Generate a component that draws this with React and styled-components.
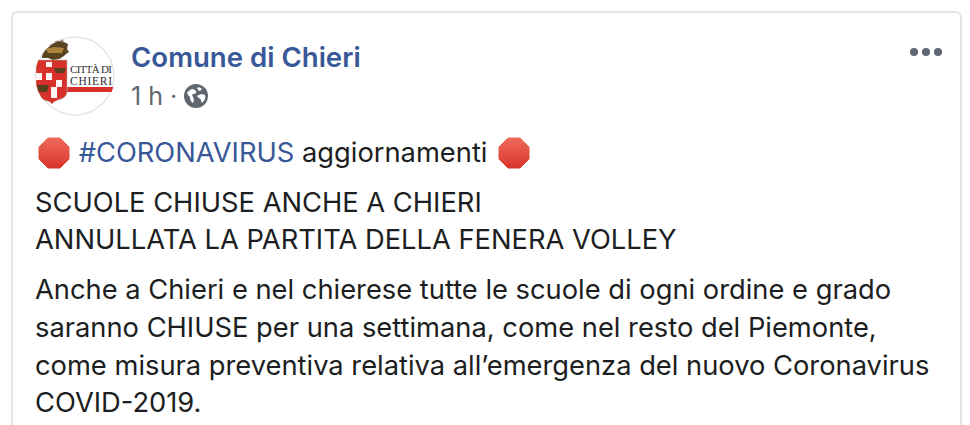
import React from "react";
import styled, { createGlobalStyle } from "styled-components";

const Page = createGlobalStyle`
    html, body {
        margin: 0;
        padding: 0;
        width: 970px;
        height: 425px;
        overflow: hidden;
        background: #fff;
    }
`;

// Component Styling
const Wrap = styled.div`
    padding: 11px 8px 0 11px;
    font-family: Inter, "Liberation Sans", Arial, sans-serif;
`;

const Card = styled.article`
    border: 2px solid #e3e4e8;
    border-bottom: 0;
    border-radius: 6px 6px 0 0;
    height: 414px;
    box-sizing: border-box;
    padding: 23px 18px 0 22px;
    overflow: hidden;
`;

const Header = styled.header`
    display: flex;
    align-items: flex-start;
`;

const Avatar = styled.div`
    width: 80px;
    height: 80px;
    flex: none;
    border-radius: 50%;
    overflow: hidden;
    svg { display: block; }
`;

const Meta = styled.div`
    flex: 1;
    margin-left: 16px;
    padding-top: 5px;
`;

const PageName = styled.div`
    color: #385898;
    font-size: 27.6px;
    font-weight: 600;
    line-height: 33px;
`;

const Time = styled.div`
    display: flex;
    align-items: center;
    margin-top: 7px;
    color: #606770;
    font-size: 25px;
    line-height: 30px;
    svg { margin-left: 7px; }
`;

const Dots = styled.div`
    display: flex;
    gap: 4px;
    margin-top: 12px;
`;

const Dot = styled.span`
    width: 8px;
    height: 8px;
    border-radius: 50%;
    background: #606770;
`;

const Body = styled.div`
    margin-top: 18px;
    color: #1c1e21;
    font-size: 27.3px;
    line-height: 37.7px;
`;

const Para = styled.p`
    margin: 0 0 12px;
    white-space: nowrap;
`;

const Tag = styled.span`
    color: #385898;
`;

const StopIcon = styled.svg`
    width: 32px;
    height: 32px;
    vertical-align: -7px;
    margin: 0 ${props => props.$after}px 0 ${props => props.$before}px;
`;

// Icons
function Stop({ before, after, id }) {
    return (
        <StopIcon viewBox="0 0 32 32" $before={before} $after={after}>
            <defs>
                <linearGradient id={id} x1="0" y1="0" x2="0" y2="1">
                    <stop offset="0" stopColor="#ef6a5c" />
                    <stop offset="1" stopColor="#d8352a" />
                </linearGradient>
            </defs>
            <polygon points="10,1 22,1 31,10 31,22 22,31 10,31 1,22 1,10" fill={`url(#${id})`} stroke={`url(#${id})`} strokeWidth="1" strokeLinejoin="round" />
        </StopIcon>
    );
}

function Globe() {
    return (
        <svg width="24" height="24" viewBox="0 0 24 24">
            <circle cx="12" cy="12" r="12" fill="#606770" />
            <path d="M3 9c1-2 3-3 5-4 2 0 3 1 4 2 1 2-1 3-3 3-1 0-1 2 0 3 1 2 1 4 0 6-2-1-3-4-3-6-1-1-2-2-3-4z" fill="#fff" />
            <path d="M13 12c3-2 6-2 8-1 1 2 0 5-2 7-1 1-2 0-2-2-1-2-3-2-4-4z" fill="#fff" />
            <path d="M13 4c2-1 4 0 5 1l-2 2c-1 0-2-1-3-3z" fill="#fff" />
        </svg>
    );
}

function Crest() {
    return (
        <svg width="80" height="80" viewBox="0 0 80 80">
            <circle cx="40" cy="40" r="39" fill="#fff" stroke="#e3e4e8" strokeWidth="1.5" />
            <path d="M31 51h49v5H31z" fill="#d8312b" />
            <path d="M1 24h31v31c0 5-3 7-6 8-3 1-7 2-9 5-2-3-5-3-8-4-5-3-7-9-8-14z" fill="#d8312b" stroke="#b9b3a6" strokeWidth="0.6" />
            <path d="M11 26h6v5h-6zM1 37h6v7H1zM11 37h6v7h-6zM21 44h6v7h-6zM16 51h6v11h-6z" fill="#fff" opacity="0.95" />
            <path d="M19 32h12l-2 5h-8zM2 49h12l-2 7H4z" fill="#57401d" />
            <path d="M7 22c0-5 4-9 8-12 3-3 7-5 12-5l6 3-1 5 2 3c-3 2-7 6-10 7l-6 1-5-2z" fill="#5a4520" />
            <path d="M11 13c4-2 12-2 18-1l-2 5H13z" fill="#ad843b" />
            <circle cx="15" cy="8" r="1.5" fill="#8c8272" />
            <circle cx="21" cy="5" r="1.5" fill="#8c8272" />
            <circle cx="27" cy="5" r="1.5" fill="#8c8272" />
            <text x="35" y="36.5" fontFamily="Liberation Serif, serif" fontSize="11" fill="#33302f" textLength="42">CITTÀ DI</text>
            <text x="35" y="48.5" fontFamily="Liberation Serif, serif" fontSize="11.5" fill="#33302f" textLength="42">CHIERI</text>
        </svg>
    );
}

// Component
export default function App() {
    return (
        <Wrap>
            <Page />
            <Card>
                <Header>
                    <Avatar><Crest /></Avatar>
                    <Meta>
                        <PageName>Comune di Chieri</PageName>
                        <Time>1 h · <Globe /></Time>
                    </Meta>
                    <Dots><Dot /><Dot /><Dot /></Dots>
                </Header>
                <Body>
                    <Para><Stop id="stop-a" before={3} after={1} /> <Tag>#CORONAVIRUS</Tag> aggiornamenti <Stop id="stop-b" before={3} after={0} /></Para>
                    <Para>SCUOLE CHIUSE ANCHE A CHIERI<br />ANNULLATA LA PARTITA DELLA FENERA VOLLEY</Para>
                    <Para>
                        Anche a Chieri e nel chierese tutte le scuole di ogni ordine e grado<br />
                        saranno CHIUSE per una settimana, come nel resto del Piemonte,<br />
                        come misura preventiva relativa all’emergenza del nuovo Coronavirus<br />
                        COVID-2019.
                    </Para>
                </Body>
            </Card>
        </Wrap>
    );
}
